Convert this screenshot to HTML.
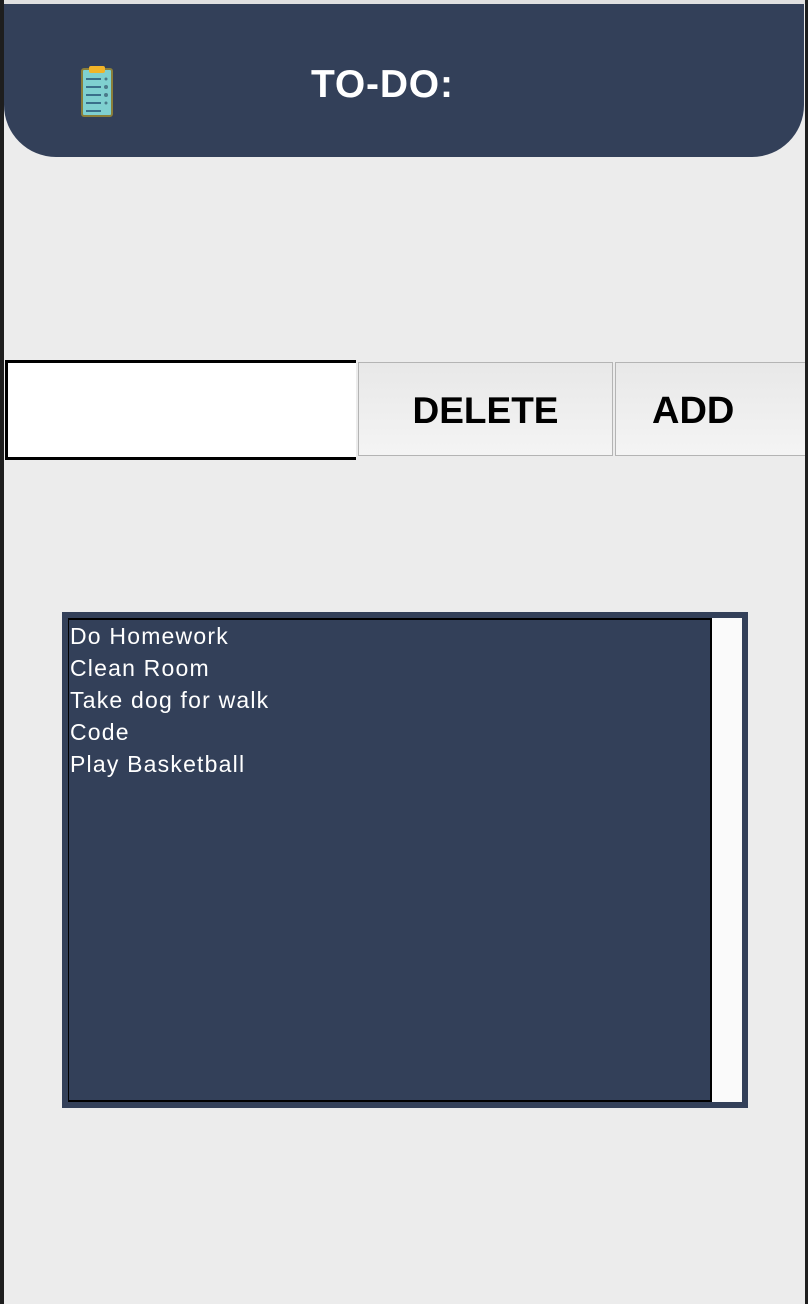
<!DOCTYPE html>
<html><head><style>
body{margin:0;width:808px;height:1304px;background:#ececec;position:relative;overflow:hidden;font-family:"Liberation Sans",sans-serif}
.edgeL{position:absolute;left:0;top:0;width:4px;height:1304px;background:#1e1e1e}
.edgeR{position:absolute;right:0;top:0;width:3px;height:1304px;background:#1e1e1e}
.top{position:absolute;left:4px;top:0;width:801px;height:4px;background:#e0e0e0}
.hdr{position:absolute;left:4px;top:4px;width:800px;height:153px;background:#334059;border-radius:0 0 52px 52px}
.title{position:absolute;left:307px;top:59px;color:#fff;font-weight:bold;font-size:39px;letter-spacing:0.8px}
.inp{position:absolute;left:5px;top:360px;width:348px;height:94px;background:#fff;border:3px solid #000;border-right:none}
.btn{position:absolute;top:362px;height:94px;border:1px solid #b4b4b4;background:linear-gradient(#e8e8e8,#f4f4f4);font-weight:bold;font-size:38px;display:flex;align-items:center;justify-content:center;color:#000;padding-top:4px;box-sizing:border-box}
.list{position:absolute;left:62px;top:612px;width:674px;height:484px;border:6px solid #334059;background:#fafafa}
.inner{position:absolute;left:0;top:0;background:#334059;border:1px solid #000;border-width:2px 2px 2px 1px;color:#fff;font-size:23px;letter-spacing:1.2px;line-height:32px;padding-left:1px;box-sizing:border-box;width:644px;height:484px}
</style></head><body>
<div class="top"></div>
<div class="hdr">
<svg style="position:absolute;left:77px;top:60px" width="34" height="54" viewBox="0 0 34 54">
<rect x="1" y="5" width="30" height="47" rx="2" fill="#7fd0d0" stroke="#8a7f3a" stroke-width="2"/>
<rect x="8" y="2" width="16" height="7" rx="2" fill="#f2b428"/>
<g stroke="#3a6f8a" stroke-width="2"><line x1="5" y1="15" x2="20" y2="15"/><line x1="5" y1="23" x2="20" y2="23"/><line x1="5" y1="31" x2="20" y2="31"/><line x1="5" y1="39" x2="20" y2="39"/><line x1="5" y1="47" x2="20" y2="47"/></g>
<g fill="#4a7a8a"><circle cx="25" cy="15" r="1.5"/><circle cx="25" cy="23" r="2"/><circle cx="25" cy="31" r="2"/><circle cx="25" cy="39" r="1.5"/></g>
</svg>
<div class="title">TO-DO:</div>
</div>
<div class="inp"></div>
<div class="btn" style="left:358px;width:255px;font-size:37px">DELETE</div>
<div class="btn" style="left:615px;width:200px;justify-content:flex-start;padding-left:36px">ADD</div>
<div class="list"><div class="inner">Do Homework<br>Clean Room<br>Take dog for walk<br>Code<br>Play Basketball</div></div>
<div class="edgeL"></div><div class="edgeR"></div>
</body></html>
